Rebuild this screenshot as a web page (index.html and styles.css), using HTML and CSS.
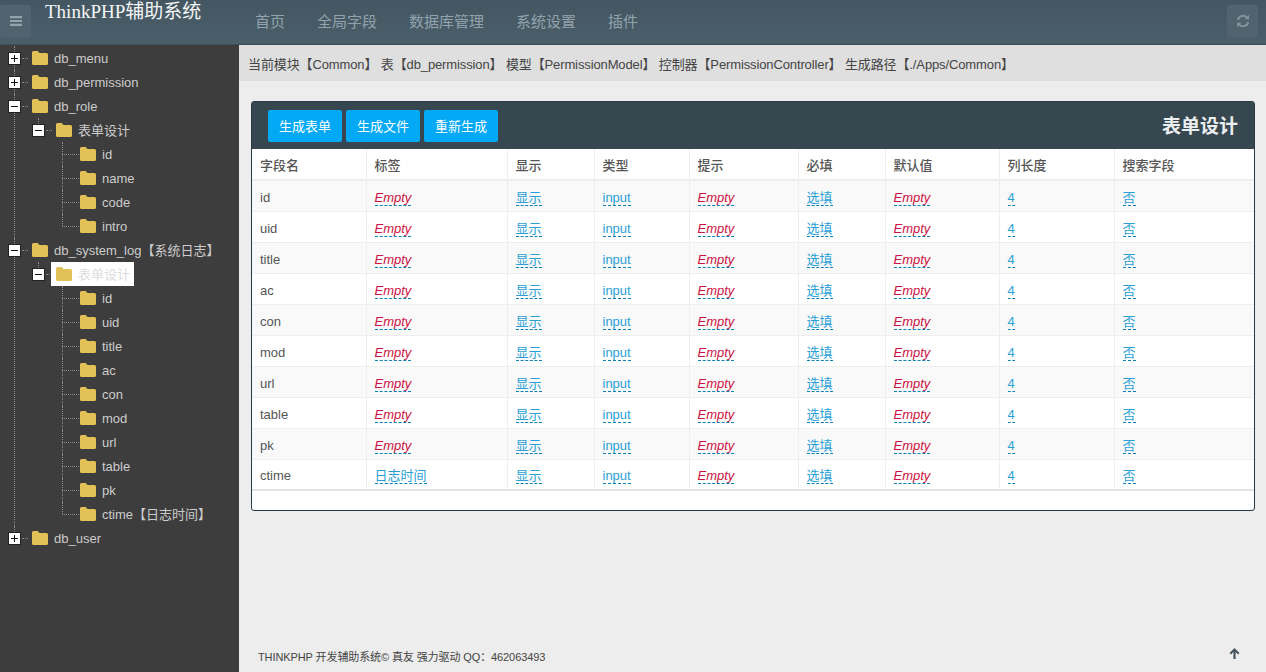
FILE: index.html
```html
<!DOCTYPE html>
<html lang="en">
<head>
  <meta charset="UTF-8" />
  <title>ThinkPHP辅助系统</title>
  <link rel="stylesheet" href="styles.css">
</head>
<body>

<header class="navbar">
  <button class="nav-btn">
    <svg width="12" height="12" viewBox="0 0 12 12"><path d="M0 1h12v2.200H0zM0 4.900h12v2.200H0zM0 8.800h12v2.200H0z" fill="currentColor"/></svg>
  </button>
  <div class="brand">ThinkPHP辅助系统</div>
  <nav class="nav-menu">
    <a>首页</a>
    <a>全局字段</a>
    <a>数据库管理</a>
    <a>系统设置</a>
    <a>插件</a>
  </nav>
  <button class="nav-btn nav-btn-right">
    <svg width="14" height="14" viewBox="0 0 14 14" fill="none" stroke="currentColor" stroke-width="2"><path d="M1.800 6A5.300 5.300 0 0 1 11 3.600"/><path d="M12.200 8A5.300 5.300 0 0 1 3 10.400"/><path d="M13 .8v4.400H8.600z" fill="currentColor" stroke="none"/><path d="M1 13.200V8.800h4.400z" fill="currentColor" stroke="none"/></svg>
  </button>
</header>

<div class="layout">
  <aside class="sidebar">
    <ul class="tree">
      <li class="closed">
        <div class="node"><span class="toggle plus"></span><span class="dots"></span><a class="label"><svg class="folder" viewBox="0 0 16 14"><path d="M1.500 0h4.300l1.700 2h7A1.500 1.500 0 0 1 16 3.500v9a1.500 1.500 0 0 1-1.500 1.500h-13A1.500 1.500 0 0 1 0 12.500v-11A1.500 1.500 0 0 1 1.500 0z"/></svg>db_menu</a></div>
      </li>
      <li class="closed">
        <div class="node"><span class="toggle plus"></span><span class="dots"></span><a class="label"><svg class="folder" viewBox="0 0 16 14"><path d="M1.500 0h4.300l1.700 2h7A1.500 1.500 0 0 1 16 3.500v9a1.500 1.500 0 0 1-1.500 1.500h-13A1.500 1.500 0 0 1 0 12.500v-11A1.500 1.500 0 0 1 1.500 0z"/></svg>db_permission</a></div>
      </li>
      <li>
        <div class="node"><span class="toggle"></span><span class="dots"></span><a class="label"><svg class="folder" viewBox="0 0 16 14"><path d="M1.500 0h4.300l1.700 2h7A1.500 1.500 0 0 1 16 3.500v9a1.500 1.500 0 0 1-1.500 1.500h-13A1.500 1.500 0 0 1 0 12.500v-11A1.500 1.500 0 0 1 1.500 0z"/></svg>db_role</a></div>
        <ul>
          <li class="last">
            <div class="node"><span class="toggle"></span><span class="dots"></span><a class="label"><svg class="folder" viewBox="0 0 16 14"><path d="M1.500 0h4.300l1.700 2h7A1.500 1.500 0 0 1 16 3.500v9a1.500 1.500 0 0 1-1.500 1.500h-13A1.500 1.500 0 0 1 0 12.500v-11A1.500 1.500 0 0 1 1.500 0z"/></svg>表单设计</a></div>
            <ul id="roleFields"></ul>
          </li>
        </ul>
      </li>
      <li>
        <div class="node"><span class="toggle"></span><span class="dots"></span><a class="label"><svg class="folder" viewBox="0 0 16 14"><path d="M1.500 0h4.300l1.700 2h7A1.500 1.500 0 0 1 16 3.500v9a1.500 1.500 0 0 1-1.500 1.500h-13A1.500 1.500 0 0 1 0 12.500v-11A1.500 1.500 0 0 1 1.500 0z"/></svg>db_system_log【系统日志】</a></div>
        <ul>
          <li class="last">
            <div class="node"><span class="toggle"></span><span class="dots"></span><a class="label selected"><svg class="folder" viewBox="0 0 16 14"><path d="M1.500 0h4.300l1.700 2h7A1.500 1.500 0 0 1 16 3.500v9a1.500 1.500 0 0 1-1.500 1.500h-13A1.500 1.500 0 0 1 0 12.500v-11A1.500 1.500 0 0 1 1.500 0z"/></svg>表单设计</a></div>
            <ul id="logFields"></ul>
          </li>
        </ul>
      </li>
      <li class="closed last">
        <div class="node"><span class="toggle plus"></span><span class="dots"></span><a class="label"><svg class="folder" viewBox="0 0 16 14"><path d="M1.500 0h4.300l1.700 2h7A1.500 1.500 0 0 1 16 3.500v9a1.500 1.500 0 0 1-1.500 1.500h-13A1.500 1.500 0 0 1 0 12.500v-11A1.500 1.500 0 0 1 1.500 0z"/></svg>db_user</a></div>
      </li>
    </ul>
  </aside>

  <main class="content">
    <div class="crumbs">当前模块【Common】 表【db_permission】 模型【PermissionModel】 控制器【PermissionController】 生成路径【./Apps/Common】</div>

    <section class="panel">
      <div class="panel-head">
        <div class="panel-actions">
          <button class="btn">生成表单</button>
          <button class="btn">生成文件</button>
          <button class="btn">重新生成</button>
        </div>
        <h2>表单设计</h2>
      </div>
      <div class="panel-body">
        <table class="fields">
          <thead>
            <tr>
              <th class="c-name">字段名</th>
              <th class="c-label">标签</th>
              <th class="c-show">显示</th>
              <th class="c-type">类型</th>
              <th class="c-tip">提示</th>
              <th class="c-req">必填</th>
              <th class="c-def">默认值</th>
              <th class="c-len">列长度</th>
              <th>搜索字段</th>
            </tr>
          </thead>
          <tbody id="fieldRows"></tbody>
        </table>
      </div>
    </section>

    <footer class="footer">
      <span>THINKPHP 开发辅助系统© 真友 强力驱动 QQ：462063493</span>
      <svg class="to-top" width="11" height="11" viewBox="0 0 11 11"><path d="M5.500 0 10.500 5 9 6.400 6.600 4V11H4.400V4L2 6.400 .5 5z" fill="currentColor"/></svg>
    </footer>
  </main>
</div>

<script>
  const folder = '<svg class="folder" viewBox="0 0 16 14"><path d="M1.500 0h4.300l1.700 2h7A1.500 1.500 0 0 1 16 3.500v9a1.500 1.500 0 0 1-1.500 1.500h-13A1.500 1.500 0 0 1 0 12.500v-11A1.500 1.500 0 0 1 1.500 0z"/></svg>';

  function fillTree(id, names) {
    document.getElementById(id).innerHTML = names.map(function(name, i) {
      const cls = i === names.length - 1 ? ' class="last"' : '';
      return `<li${cls}><div class="node"><span class="dots leaf"></span><a class="label">${folder}${name}</a></div></li>`;
    }).join('');
  }

  fillTree('roleFields', ['id', 'name', 'code', 'intro']);
  fillTree('logFields', ['id', 'uid', 'title', 'ac', 'con', 'mod', 'url', 'table', 'pk', 'ctime【日志时间】']);

  const rows = ['id', 'uid', 'title', 'ac', 'con', 'mod', 'url', 'table', 'pk', 'ctime'];
  const empty = '<a class="edit empty">Empty</a>';

  document.getElementById('fieldRows').innerHTML = rows.map(function(name) {
    const label = name === 'ctime' ? '<a class="edit">日志时间</a>' : empty;
    return `<tr>
      <td>${name}</td>
      <td>${label}</td>
      <td><a class="edit">显示</a></td>
      <td><a class="edit">input</a></td>
      <td>${empty}</td>
      <td><a class="edit">选填</a></td>
      <td>${empty}</td>
      <td><a class="edit">4</a></td>
      <td><a class="edit">否</a></td>
    </tr>`;
  }).join('');
</script>

</body>
</html>
```

FILE: styles.css
```css
* {
  box-sizing: border-box;
}

html, body {
  height: 100%;
}

body {
  margin: 0;
  overflow: hidden;
  background-color: #ededed;
  color: #444;
  font-family: "Liberation Sans", "Noto Sans CJK SC", sans-serif;
  font-size: 13px;
}

ul {
  list-style: none;
  margin: 0;
  padding: 0;
}

/* top bar */
.navbar {
  display: flex;
  align-items: flex-start;
  height: 45px;
  background: linear-gradient(to bottom, #435661, #4b5f6b);
  border-bottom: 1px solid #3d4e58;
}

.nav-btn {
  display: flex;
  align-items: center;
  justify-content: center;
  width: 31px;
  height: 32px;
  margin-top: 5px;
  padding: 0;
  border: none;
  border-radius: 2px;
  background-color: #50636f;
  color: #93a4ae;
}

.nav-btn-right {
  margin-left: auto;
  margin-right: 8px;
  color: #82939d;
}

.brand {
  width: 210px;
  margin-left: 14px;
  color: #f4f6f7;
  font-family: "Liberation Serif", "Noto Sans CJK SC", serif;
  font-size: 19px;
  line-height: 24px;
}

.nav-menu {
  display: flex;
  gap: 32px;
  padding-top: 12px;
}

.nav-menu a {
  color: #92a3ad;
  font-size: 15px;
  line-height: 20px;
}

.layout {
  display: flex;
  height: 627px;
}

/* tree */
.sidebar {
  flex: none;
  width: 239px;
  background-color: #3d3d3d;
  color: #ccc;
}

.tree {
  padding: 1px 0 0 9px;
}

.tree li {
  position: relative;
}

.tree li::before {
  content: "";
  position: absolute;
  top: 0;
  bottom: 0;
  left: 5px;
  border-left: 1px dotted #8a8a8a;
}

.tree li.last::before {
  bottom: auto;
  height: 12px;
}

.tree ul {
  padding-left: 24px;
}

.node {
  position: relative;
  display: flex;
  align-items: center;
  height: 24px;
}

.toggle {
  position: relative;
  z-index: 1;
  flex: none;
  width: 11px;
  height: 11px;
  background-color: #fff;
  outline: 1px solid #222;
}

.toggle::before {
  content: "";
  position: absolute;
  left: 2px;
  top: 5px;
  width: 7px;
  height: 1px;
  background-color: #111;
}

.toggle.plus::after {
  content: "";
  position: absolute;
  left: 5px;
  top: 2px;
  width: 1px;
  height: 7px;
  background-color: #111;
}

.dots {
  flex: none;
  width: 6px;
  margin: 0 3px 0 2px;
  border-top: 1px dotted #8a8a8a;
}

.dots.leaf {
  width: 17px;
  margin: 0 0 0 5px;
}

.label {
  display: flex;
  align-items: center;
  height: 24px;
  padding: 2px 4px 0 1px;
  line-height: 16px;
  white-space: nowrap;
}

.label.selected {
  margin-left: -4px;
  padding-left: 5px;
  background-color: #fff;
  color: #ddd;
}

.folder {
  flex: none;
  width: 16px;
  height: 14px;
  margin: -2px 6px 0 0;
  fill: #e2c256;
}

/* content */
.content {
  position: relative;
  flex: 1;
  display: flex;
  flex-direction: column;
  min-width: 0;
}

.crumbs {
  height: 36px;
  padding-left: 9px;
  background-color: #dfdfdf;
  color: #444;
  letter-spacing: -0.12px;
  line-height: 40px;
  white-space: nowrap;
}

.panel {
  width: 1004px;
  height: 410px;
  margin: 20px 0 0 12px;
  background-color: #fff;
  border: 1px solid #2b3a42;
  border-radius: 3px;
}

.panel-head {
  display: flex;
  align-items: center;
  justify-content: space-between;
  height: 47px;
  padding: 0 16px;
  background-color: #37474f;
}

.panel-actions {
  display: flex;
  gap: 4px;
}

.btn {
  width: 74px;
  height: 32px;
  padding: 0;
  border: none;
  border-radius: 2px;
  background-color: #03a9f4;
  color: #fff;
  font-family: inherit;
  font-size: 13px;
}

.panel-head h2 {
  margin: 0 0 2px;
  color: #eceff1;
  font-size: 19px;
  font-weight: 700;
}

.fields {
  width: 100%;
  border-collapse: collapse;
  table-layout: fixed;
  border-bottom: 2px solid #e3e3e3;
  color: #555;
}

.fields th,
.fields td {
  height: 31px;
  padding: 0 8px;
  text-align: left;
  border-left: 1px solid #eee;
  border-top: 1px solid #eee;
  font-size: 13px;
  line-height: 18px;
}

.fields td {
  padding-top: 4px;
}

.fields th:first-child,
.fields td:first-child {
  border-left: none;
}

.fields th {
  padding-top: 3px;
  border-top: none;
  border-bottom: 2px solid #eee;
  font-weight: 500;
}

.fields tbody tr:nth-child(odd) {
  background-color: #f9f9f9;
}

.c-name { width: 114px; }
.c-label { width: 141px; }
.c-show { width: 87px; }
.c-type { width: 95px; }
.c-tip { width: 109px; }
.c-req { width: 87px; }
.c-def { width: 114px; }
.c-len { width: 115px; }

.edit {
  color: #2a9fd6;
  border-bottom: 1px dashed #0f7fb8;
}

.empty {
  color: #cc1144;
  font-style: italic;
}

.footer {
  display: flex;
  align-items: center;
  justify-content: space-between;
  margin-top: auto;
  padding: 0 26px 7px 19px;
  color: #444;
  font-size: 11px;
  letter-spacing: -0.1px;
  line-height: 16px;
}

.to-top {
  margin-top: -7px;
  color: #46555f;
}
```
